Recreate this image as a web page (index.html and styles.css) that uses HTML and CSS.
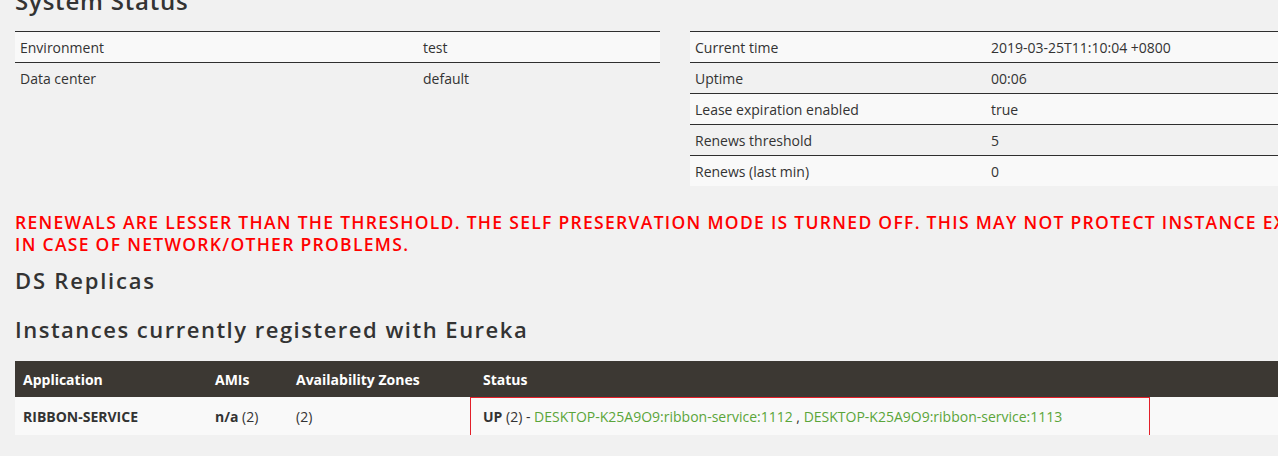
FILE: index.html
```html
<!DOCTYPE html>
<html>
<head>
<meta charset="utf-8">
<link rel="stylesheet" href="styles.css">
</head>
<body>
<div class="page">
  <h2 class="title">System Status</h2>
  <div class="two-col">
    <table class="kv">
      <tr class="odd"><td class="k1">Environment</td><td>test</td></tr>
      <tr><td class="k1">Data center</td><td>default</td></tr>
    </table>
    <table class="kv">
      <tr class="odd"><td class="k2">Current time</td><td>2019-03-25T11:10:04 +0800</td></tr>
      <tr><td class="k2">Uptime</td><td>00:06</td></tr>
      <tr class="odd"><td class="k2">Lease expiration enabled</td><td>true</td></tr>
      <tr><td class="k2">Renews threshold</td><td>5</td></tr>
      <tr class="odd"><td class="k2">Renews (last min)</td><td>0</td></tr>
    </table>
  </div>
  <h4 class="warn">RENEWALS ARE LESSER THAN THE THRESHOLD. THE SELF PRESERVATION MODE IS TURNED OFF. THIS MAY NOT PROTECT INSTANCE EXPIRY<br>IN CASE OF NETWORK/OTHER PROBLEMS.</h4>
  <h3 class="sub">DS Replicas</h3>
  <h3 class="sub inst">Instances currently registered with Eureka</h3>
  <div class="apps-wrap">
    <table class="apps">
      <thead>
        <tr><th class="c1">Application</th><th class="c2">AMIs</th><th class="c3">Availability Zones</th><th>Status</th></tr>
      </thead>
      <tbody>
        <tr>
          <td class="c1"><b>RIBBON-SERVICE</b></td>
          <td class="c2"><b>n/a</b> (2)</td>
          <td class="c3">(2)</td>
          <td><b>UP</b> (2) - <a class="inst-link">DESKTOP-K25A9O9:ribbon-service:1112</a> , <a class="inst-link">DESKTOP-K25A9O9:ribbon-service:1113</a></td>
        </tr>
      </tbody>
    </table>
    <div class="mark"></div>
  </div>
</div>
</body>
</html>
```

FILE: styles.css
```css
html { overflow: hidden; }
body {
  margin: 0;
  background: #f1f1f1;
  color: #333;
  font-family: "Open Sans", "Noto Sans", sans-serif;
  font-size: 14px;
}
.page {
  width: 1320px;
  padding: 0 15px;
}
.title {
  margin: -14px 0 0 0;
  font-size: 24px;
  font-weight: 600;
  line-height: 30px;
  height: 45px;
  letter-spacing: 0.8px;
  color: #333;
}
.two-col {
  display: flex;
  gap: 30px;
  align-items: flex-start;
}
table {
  border-collapse: collapse;
  border-spacing: 0;
}
.kv {
  width: 645px;
}
.kv td {
  border-top: 1px solid #2f2f2f;
  padding: 0 5px;
  height: 30px;
  vertical-align: middle;
}
.kv tr.odd td { background: #f9f9f9; }
.kv .k1 { width: 393px; }
.kv .k2 { width: 286px; }
.warn {
  margin: 25px 0 0 0;
  color: #ff0000;
  font-size: 17.5px;
  font-weight: 600;
  line-height: 22px;
  letter-spacing: 1.3px;
  white-space: nowrap;
}
.sub {
  margin: 11px 0 0 0;
  font-size: 22px;
  font-weight: 600;
  line-height: 28px;
  letter-spacing: 1.8px;
  color: #333;
}
.sub.inst {
  margin-top: 21px;
  letter-spacing: 1.5px;
}
.apps-wrap {
  position: relative;
  margin-top: 18px;
}
.apps {
  width: 1320px;
}
.apps th {
  background: #3c3833;
  color: #fff;
  text-align: left;
  font-weight: 700;
  height: 36px;
  padding: 0 8px;
}
.apps td {
  background: #f9f9f9;
  height: 38px;
  padding: 0 8px;
  vertical-align: middle;
}
.apps .c1 { width: 176px; }
.apps .c2 { width: 65px; }
.apps .c3 { width: 171px; }
.inst-link { color: #5ba53a; }
.mark {
  position: absolute;
  left: 455px;
  top: 36px;
  width: 678px;
  height: 39px;
  border: 1px solid #e3202a;
}
```
